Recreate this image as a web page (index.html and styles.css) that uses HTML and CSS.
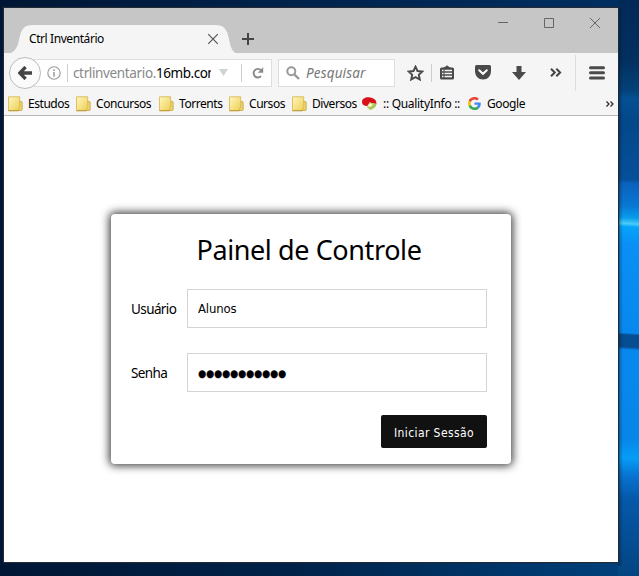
FILE: index.html
```html
<!DOCTYPE html>
<html lang="pt-BR">
<head>
<meta charset="utf-8">
<title>Ctrl Inventário</title>
<link rel="stylesheet" href="styles.css">
</head>
<body>
<svg class="defs" width="0" height="0" aria-hidden="true">
  <defs>
    <linearGradient id="paper" x1="0" y1="0" x2="1" y2="1"><stop offset="0" stop-color="#fff6bd"/><stop offset="1" stop-color="#edcf55"/></linearGradient>
    <symbol id="folder" viewBox="0 0 15 16"><path d="M11 5.500h2.200q1 0 1 1v7q0 1-1 1H9z" fill="#ecd16c" stroke="#c6a541" stroke-width=".8"/><path d="M.5.8h11.200v9.700L10 14.700H.5z" fill="url(#paper)" stroke="#d4b44c" stroke-width=".8"/><path d="M.5 14.700h10" stroke="#b99834"/></symbol>
  </defs>
</svg>
<div class="window">
  <div class="titlebar">
    <div class="tab">
      <svg class="tab-shape" width="238" height="29" viewBox="0 0 238 29"><path d="M0 29C9 29 13 25 15 15C17 4 20 0 29 0H211C220 0 223 4 225 14C227 25 229 29 238 29Z" fill="#f5f5f5"/></svg>
      <span class="tab-title">Ctrl Inventário</span>
      <svg class="tab-close" width="12" height="12" viewBox="0 0 12 12"><path d="M1.200 1.200l9.600 9.600M10.800 1.200l-9.600 9.600" stroke="#555" stroke-width="1.200"/></svg>
    </div>
    <svg class="new-tab" width="12" height="12" viewBox="0 0 12 12"><path d="M6 0v12M0 6h12" stroke="#444" stroke-width="2"/></svg>
    <div class="controls">
      <svg width="12" height="12" viewBox="0 0 12 12"><path d="M1 5.500h10" stroke="#666"/></svg>
      <svg width="12" height="12" viewBox="0 0 12 12"><path d="M1.500 1.500h9v9h-9z" fill="none" stroke="#666"/></svg>
      <svg width="12" height="12" viewBox="0 0 12 12"><path d="M1 1l10 10M11 1L1 11" stroke="#666"/></svg>
    </div>
  </div>
  <div class="navbar">
    <div class="back"><svg width="14" height="14" viewBox="0 0 14 14"><path d="M7.600 1L1.700 7l5.900 6M2.500 7H14" fill="none" stroke="#444" stroke-width="3.300"/></svg></div>
    <div class="urlbar">
      <svg class="info" width="14" height="14" viewBox="0 0 14 14"><circle cx="7" cy="7" r="6.200" fill="none" stroke="#999" stroke-width="1.100"/><path d="M7 3.200v1.700M7 6v4.700" stroke="#999" stroke-width="1.500"/></svg>
      <i class="rule"></i>
      <span class="url">ctrlinventario.<b>16mb.com</b></span>
      <svg class="drop" width="9" height="7" viewBox="0 0 9 7"><path d="M0 0h9L4.500 7z" fill="#d2d2d2"/></svg>
      <i class="rule"></i>
      <svg class="reload" width="12" height="12" viewBox="0 0 12 12"><path d="M9 9.200A4.300 4.300 0 1 1 9 3.200" fill="none" stroke="#888" stroke-width="1.900"/><path d="M11.200.3v5.500H5.800z" fill="#888"/></svg>
    </div>
    <div class="search">
      <svg width="14" height="14" viewBox="0 0 14 14"><circle cx="5.300" cy="5.300" r="4" fill="none" stroke="#999" stroke-width="2"/><path d="M8.300 8.300l4.700 4.700" stroke="#999" stroke-width="2.400"/></svg>
      <span>Pesquisar</span>
    </div>
    <div class="tools">
      <svg class="star" width="17" height="16" viewBox="0 0 17 16"><path d="M8.500 1.700l2 4.300 4.900.5-3.600 3.300 1 4.700-4.300-2.300-4.300 2.300 1-4.700L1.600 6.500l4.900-.5z" fill="none" stroke="#4a4a4a" stroke-width="1.900"/></svg>
      <i class="rule"></i>
      <svg class="list" width="14" height="15" viewBox="0 0 14 15"><path d="M4 3.500V2.500h1.500a1.500 1.500 0 0 1 3 0H10v1" fill="#4a4a4a" stroke="#4a4a4a"/><rect y="2.500" width="14" height="12" rx="1.500" fill="#4a4a4a"/><path d="M2 5.500h1.500M2 8.500h1.500M2 11.500h1.500M4.500 5.500H12M4.500 8.500H12M4.500 11.500H12" stroke="#f5f5f5" stroke-width="1.500"/></svg>
      <svg class="pocket" width="16" height="15" viewBox="0 0 16 15"><path d="M1.500 0h13Q16 0 16 1.500V6C16 11 12.500 14.500 8 14.500S0 11 0 6V1.500Q0 0 1.500 0z" fill="#4a4a4a"/><path d="M4.200 5.200L8 8.800l3.800-3.600" fill="none" stroke="#fff" stroke-width="2" stroke-linecap="round"/></svg>
      <svg class="down" width="14" height="14" viewBox="0 0 14 14"><path d="M4.500 0h5v6H14l-7 8-7-8h4.500z" fill="#4a4a4a"/></svg>
      <svg class="more" width="12" height="9" viewBox="0 0 12 9"><path d="M1 .7l3.800 3.800L1 8.300M6.300.7l3.800 3.800-3.800 3.800" fill="none" stroke="#444" stroke-width="2"/></svg>
      <i class="rule tall"></i>
      <svg class="menu" width="16" height="14" viewBox="0 0 16 14"><path d="M1.500 1.700h13M1.500 6.800h13M1.500 11.900h13" stroke="#4a4a4a" stroke-width="3" stroke-linecap="round"/></svg>
    </div>
  </div>
  <div class="bookmarks">
    <div class="bm estudos"><svg><use href="#folder"/></svg><span>Estudos</span></div>
    <div class="bm concursos"><svg><use href="#folder"/></svg><span>Concursos</span></div>
    <div class="bm torrents"><svg><use href="#folder"/></svg><span>Torrents</span></div>
    <div class="bm cursos"><svg><use href="#folder"/></svg><span>Cursos</span></div>
    <div class="bm diversos"><svg><use href="#folder"/></svg><span>Diversos</span></div>
    <div class="bm quality"><svg viewBox="0 0 15 16"><path d="M0 6C0 0 11 0 14 5L14.500 8 7.500 6.500 5.500 10Q0 10 0 6z" fill="#d91017"/><path d="M7.500 6.500l7 1.500Q14 12 8 14L5 11z" fill="#a9c65c"/><path d="M5.500 10l3-3 2.500 2-3 2z" fill="#fff6c8"/></svg><span>:: QualityInfo ::</span></div>
    <div class="bm google"><svg viewBox="0 0 48 48"><path fill="#EA4335" d="M24 9.500c3.540 0 6.710 1.220 9.210 3.600l6.850-6.850C35.900 2.380 30.470 0 24 0 14.620 0 6.510 5.380 2.560 13.220l7.980 6.190C12.430 13.720 17.740 9.500 24 9.500z"/><path fill="#4285F4" d="M46.980 24.550c0-1.570-.15-3.090-.38-4.550H24v9.020h12.940c-.58 2.960-2.260 5.480-4.780 7.180l7.730 6c4.510-4.180 7.090-10.360 7.090-17.650z"/><path fill="#FBBC05" d="M10.530 28.590c-.48-1.450-.76-2.990-.76-4.590s.27-3.140.76-4.590l-7.980-6.190C.92 16.460 0 20.120 0 24s.92 7.540 2.560 10.780z"/><path fill="#34A853" d="M24 48c6.480 0 11.930-2.130 15.890-5.810l-7.730-6c-2.150 1.450-4.920 2.300-8.160 2.300-6.260 0-11.570-4.220-13.470-9.910l-7.980 6.190C6.510 42.620 14.620 48 24 48z"/></svg><span>Google</span></div>
    <svg class="overflow" width="8" height="6" viewBox="0 0 8 6"><path d="M.5.500L3 3 .5 5.500M4.500.500L7 3 4.500 5.500" fill="none" stroke="#222" stroke-width="1.200"/></svg>
  </div>
  <main class="page">
    <form class="card">
      <h1>Painel de Controle</h1>
      <div class="field"><label for="user">Usuário</label><input id="user" type="text" value="Alunos"></div>
      <div class="field"><label>Senha</label><div class="dots">●●●●●●●●●●●</div></div>
      <button type="button">Iniciar Sessão</button>
    </form>
  </main>
</div>
</body>
</html>
```
FILE: styles.css
```css
* { box-sizing: border-box; }
body {
  margin: 0; width: 639px; height: 576px; padding: 8px 21px 14px 4px; overflow: hidden;
  font-family: "Noto Sans", sans-serif; font-size: 12px; color: #000;
  background:
    linear-gradient(90deg, rgba(0,15,40,.4), transparent 5px) right 8px / 21px 558px no-repeat,
    linear-gradient(183deg, #012a58 0, #02305f 60px, #034178 90px, #045091 99px, #034888 122px, #06509a 180px, #0b60bb 183px, #0878d5 206px, #089ceb 218px, #4accfa 224px, #06a4fa 227px, #098ff5 245px, #0888ef 333px, #074d91 335px, #074d91 347px, #0888ef 350px, #0785e8 438px, #059df7 458px, #0774d2 475px, #0559aa 498px, #034580 576px) right top / 21px 576px no-repeat,
    linear-gradient(90deg, #001634, #00224a 45%, #002e60) 0 0 / 618px 100px no-repeat,
    linear-gradient(90deg, #001634, #002248 45%, #00427e);
}
.defs { position: absolute; }
svg { display: block; flex: none; }
.window { width: 614px; height: 554px; background: #fff; display: flex; flex-direction: column; box-shadow: 0 0 1px 1px #222b35; }
.titlebar { height: 45px; background: #c6c6c6; display: flex; align-items: flex-start; flex: none; }
.tab { width: 238px; height: 29px; margin: 17px 0 0; display: grid; grid-template-columns: 25px 179px 34px; align-items: center; }
.tab-shape { grid-area: 1 / 1 / 2 / 4; }
.tab-title { grid-area: 1 / 2; letter-spacing: -.42px; line-height: 16px; white-space: nowrap; margin-top: -1px; }
.tab-close { grid-area: 1 / 3; margin: -1px 0 0 -1px; }
.new-tab { margin: 25px 0 0; }
.controls { display: flex; gap: 34px; margin: 9px 0 0 auto; padding-right: 17px; }
.navbar { height: 39px; flex: none; background: #f5f5f5; display: flex; align-items: center; padding-left: 5px; }
.back { width: 32px; height: 32px; border: 1px solid #bbb; border-radius: 50%; background: #fbfbfb; display: flex; align-items: center; justify-content: center; z-index: 1; flex: none; }
.urlbar { width: 238px; height: 28px; margin-left: -7px; border: 1px solid #ddd; background: #fff; display: flex; align-items: center; flex: none; }
.info { margin-left: 12px; }
.rule { width: 1px; height: 18px; background: #ccc; flex: none; }
.info + .rule { margin-left: 6px; }
.url { width: 138px; margin-left: 5px; overflow: hidden; white-space: nowrap; font-size: 13.500px; letter-spacing: -.36px; color: #888; line-height: 20px; }
.url b { font-weight: 400; color: #000; letter-spacing: -.46px; }
.drop { margin: 0 14px 0 8px; }
.drop + .rule { margin-left: -1px; margin-right: 6px; }
.reload { margin-left: 4px; }
.search { width: 117px; height: 28px; margin-left: 6px; border: 1px solid #ddd; background: #fff; display: flex; align-items: center; padding-left: 7px; gap: 6px; color: #777; font-size: 13.500px; font-style: italic; flex: none; }
.search span { letter-spacing: .15px; }
.tools { display: flex; align-items: center; height: 39px; }
.star { margin-left: 12px; }
.star + .rule { margin-left: 7px; }
.list { margin-left: 8px; }
.pocket { margin-left: 21px; }
.down { margin-left: 21px; }
.more { margin-left: 24px; }
.tall { height: 36px; margin-left: 13px; background: #ddd; }
.menu { margin-left: 13px; }
.bookmarks { height: 24px; flex: none; background: #f5f5f5; border-bottom: 1px solid #b9b9b9; display: flex; align-items: center; padding-left: 4px; }
.bm { display: flex; gap: 5px; white-space: nowrap; line-height: 16px; letter-spacing: -.45px; }
.bm svg { width: 15px; height: 16px; }
.estudos { width: 68px; }
.concursos { width: 83px; }
.torrents { width: 70px; }
.cursos { width: 63px; }
.diversos { width: 70px; }
.quality { width: 105px; gap: 6px; letter-spacing: -.3px; }
.google { letter-spacing: -.4px; }
.google svg { width: 13px; height: 13px; margin: 1px 1px 0 1px; }
.overflow { margin: 0 4px 0 auto; }
.page { flex: 1; display: flex; justify-content: center; align-items: flex-start; }
.card { width: 400px; height: 250px; margin: 98px 0 0; padding: 18px 24px 16px 20px; border-radius: 4px; background: #fff; box-shadow: 0 0 9px 2px #444; display: flex; flex-direction: column; }
h1 { margin: -1px 0 21px; font-size: 27px; letter-spacing: -.4px; line-height: 37px; font-weight: 400; text-align: center; white-space: nowrap; }
.field { display: grid; grid-template-columns: 56px 300px; align-items: center; margin-bottom: 25px; font-size: 13.500px; letter-spacing: -.6px; }
label { padding-top: 1px; }
input, .dots { height: 39px; border: 1px solid #d4d4d4; padding: 0 10px; font: 13px "DejaVu Sans Condensed", "DejaVu Sans", sans-serif; color: #000; width: 300px; outline: 0; }
input { letter-spacing: -.15px; }
.dots { font-size: 10.500px; line-height: 38px; letter-spacing: -.25px; }
button { align-self: flex-end; width: 106px; height: 33px; margin-top: -2px; padding: 2px 0 0; border: 0; border-radius: 2px; background: #111; color: #fff; font: 12px "DejaVu Sans Condensed", "DejaVu Sans", sans-serif; letter-spacing: .4px; white-space: nowrap; flex: none; }
```
